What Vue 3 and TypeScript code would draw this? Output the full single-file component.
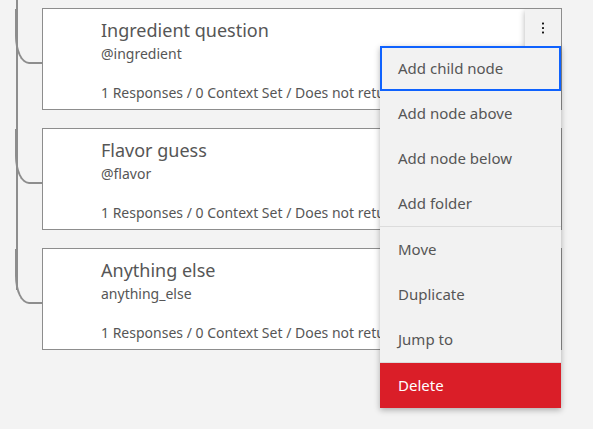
<script setup lang="ts">
import { ref } from 'vue'

interface DialogNode {
  title: string
  condition: string
  summary: string
}

interface MenuItem {
  label: string
  divided?: boolean
  danger?: boolean
}

const nodes: DialogNode[] = [
  { title: 'Ingredient question', condition: '@ingredient', summary: '1 Responses / 0 Context Set / Does not return' },
  { title: 'Flavor guess', condition: '@flavor', summary: '1 Responses / 0 Context Set / Does not return' },
  { title: 'Anything else', condition: 'anything_else', summary: '1 Responses / 0 Context Set / Does not return' },
]

const menuItems: MenuItem[] = [
  { label: 'Add child node' },
  { label: 'Add node above' },
  { label: 'Add node below' },
  { label: 'Add folder' },
  { label: 'Move', divided: true },
  { label: 'Duplicate' },
  { label: 'Jump to' },
  { label: 'Delete', divided: true, danger: true },
]

const openIndex = ref(0)
const activeItem = ref(0)

function toggle(index: number) {
  openIndex.value = openIndex.value === index ? -1 : index
}
</script>

<template>
  <main class="tree">
    <ul class="nodes">
      <li v-for="(node, i) in nodes" :key="node.title" class="node">
        <span class="trunk"></span>
        <span class="branch"></span>
        <article class="card">
          <h2 class="title">{{ node.title }}</h2>
          <p class="condition">{{ node.condition }}</p>
          <p class="summary">{{ node.summary }}</p>
        </article>
        <div v-if="openIndex === i" class="overflow">
          <button class="trigger" type="button" aria-label="Node options" aria-expanded="true" @click="toggle(i)">
            <svg width="16" height="16" viewBox="0 0 16 16" fill="#161616" aria-hidden="true">
              <rect x="7" y="2.5" width="2" height="2" rx="0.4" />
              <rect x="7" y="7" width="2" height="2" rx="0.4" />
              <rect x="7" y="11.5" width="2" height="2" rx="0.4" />
            </svg>
          </button>
          <ul class="menu" role="menu">
            <li
              v-for="(item, m) in menuItems"
              :key="item.label"
              class="entry"
              :class="{ divided: item.divided }"
              role="none"
            >
              <button
                class="option"
                :class="{ active: m === activeItem, danger: item.danger }"
                type="button"
                role="menuitem"
                @focus="activeItem = m"
              >
                {{ item.label }}
              </button>
            </li>
          </ul>
        </div>
      </li>
    </ul>
  </main>
</template>

<style>
body {
  background: #f3f3f3;
}
</style>

<style scoped>
.tree {
  box-sizing: border-box;
  min-height: 100vh;
  padding: 8px 31px 8px 42px;
  overflow: hidden;
  font-family: 'Noto Sans', 'Open Sans', sans-serif;
  color: #565656;
}

.nodes,
.menu {
  margin: 0;
  padding: 0;
  list-style: none;
}

.nodes {
  display: flex;
  flex-direction: column;
  gap: 18px;
}

.node {
  position: relative;
}

.trunk {
  position: absolute;
  left: -26px;
  top: -66px;
  width: 2px;
  height: 108px;
  background: #8d8d8d;
}

.node:not(:last-child) .trunk {
  height: 168px;
}

.branch {
  position: absolute;
  left: -27px;
  top: 1px;
  box-sizing: border-box;
  width: 27px;
  height: 55px;
  border-left: 2px solid #8d8d8d;
  border-bottom: 2px solid #8d8d8d;
  border-bottom-left-radius: 14px 28px;
}

.card {
  box-sizing: border-box;
  padding: 8px 58px 5px;
  border: 1px solid #8d8d8d;
  background: #fff;
  white-space: nowrap;
  overflow: hidden;
}

.title,
.condition,
.summary {
  margin: 0;
  font-weight: 400;
}

.title {
  font-size: 18px;
  line-height: 26px;
}

.condition,
.summary {
  font-size: 14px;
  line-height: 22px;
}

.summary {
  margin-top: 17px;
}

.overflow {
  position: absolute;
  z-index: 1;
  top: 1px;
  right: 1px;
  display: flex;
  flex-direction: column;
  align-items: flex-end;
}

.trigger {
  display: flex;
  align-items: center;
  justify-content: center;
  width: 36px;
  height: 37px;
  padding: 0;
  border: 0;
  background: #f2f2f2;
  box-shadow: 0 2px 6px rgba(0, 0, 0, 0.3);
  clip-path: inset(0 0 0 -8px);
}

.menu {
  width: 181px;
  background: #f2f2f2;
  box-shadow: 0 2px 6px rgba(0, 0, 0, 0.3);
}

.divided {
  border-top: 1px solid #dcdcdc;
}

.option {
  display: block;
  width: 100%;
  height: 45px;
  padding: 0 16px 1px;
  border: 2px solid transparent;
  background: none;
  color: inherit;
  font: inherit;
  font-size: 15px;
  text-align: left;
}

.active {
  border-color: #0f62fe;
  outline: none;
}

.danger {
  border-color: #da1e28;
  background: #da1e28;
  color: #fff;
}
</style>
